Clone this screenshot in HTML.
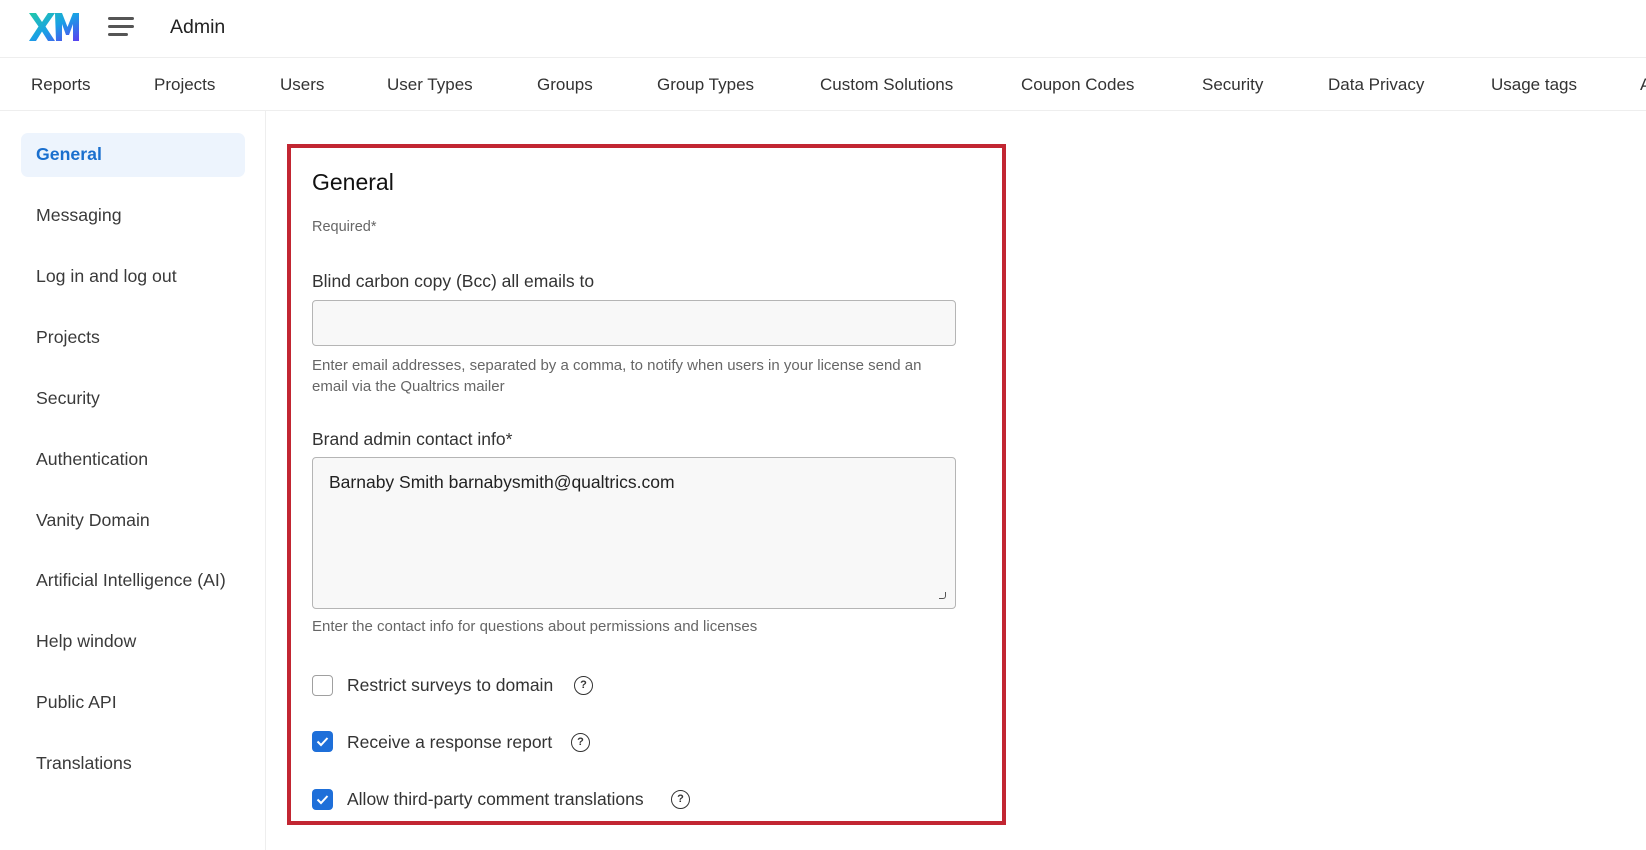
<!DOCTYPE html>
<html><head><meta charset="utf-8"><style>
*{box-sizing:border-box;margin:0;padding:0}
body{width:1646px;height:850px;overflow:hidden;background:#fff;font-family:"Liberation Sans",sans-serif;color:#333;position:relative}
.a{position:absolute;white-space:nowrap}
.nav{font-size:17px;color:#333;top:75px}
.side{font-size:17.7px;color:#3a3a3a;left:36px}
.cb{position:absolute;left:312px;width:21px;height:21px;border-radius:4px}
.cb.on{background:#1e6fd9}
.cb.off{border:1.5px solid #a0a0a0;background:#fff}
.lbl{font-size:17.5px;color:#333;left:347px}
.q{position:absolute;width:19px;height:19px;border:1.5px solid #333;border-radius:50%;font-size:11px;text-align:center;line-height:16px;font-weight:bold;color:#333}
.help{font-size:15px;color:#666}
</style></head><body>
<svg class="a" style="left:29px;top:13px" width="50" height="28" viewBox="0 0 50 28">
<defs><linearGradient id="g" x1="0" y1="0" x2="1" y2="1"><stop offset="0" stop-color="#21c9a8"/><stop offset=".5" stop-color="#1aa0e6"/><stop offset="1" stop-color="#5b3ef0"/></linearGradient></defs>
<path fill="url(#g)" d="M0 0h7l6 9 6-9h7l-9.5 13.5L26 28h-7l-6-9.5L7 28H0l9.5-14.5z M26 0h7l5.5 14L44 0h6v28h-6V11l-4 11h-3l-4-11v17h-6z"/></svg>
<div class="a" style="left:108px;top:17px;width:26px;height:3px;background:#555;border-radius:2px"></div>
<div class="a" style="left:108px;top:25px;width:26px;height:3px;background:#555;border-radius:2px"></div>
<div class="a" style="left:108px;top:33px;width:20px;height:3px;background:#555;border-radius:2px"></div>
<div class="a" style="left:170px;top:16px;font-size:19.5px;color:#222">Admin</div>
<div class="a" style="left:0;top:57px;width:1646px;height:1px;background:#eee"></div>
<div class="a nav" style="left:31px">Reports</div>
<div class="a nav" style="left:154px">Projects</div>
<div class="a nav" style="left:280px">Users</div>
<div class="a nav" style="left:387px">User Types</div>
<div class="a nav" style="left:537px">Groups</div>
<div class="a nav" style="left:657px">Group Types</div>
<div class="a nav" style="left:820px">Custom Solutions</div>
<div class="a nav" style="left:1021px">Coupon Codes</div>
<div class="a nav" style="left:1202px">Security</div>
<div class="a nav" style="left:1328px">Data Privacy</div>
<div class="a nav" style="left:1491px">Usage tags</div>
<div class="a nav" style="left:1640px">A</div>
<div class="a" style="left:0;top:110px;width:1646px;height:1px;background:#eee"></div>
<div class="a" style="left:265px;top:111px;width:1px;height:739px;background:#eee"></div>
<div class="a" style="left:21px;top:133px;width:224px;height:44px;background:#edf4fd;border-radius:7px"></div>
<div class="a side" style="top:144px;color:#1a6fce;font-weight:bold">General</div>
<div class="a side" style="top:205px">Messaging</div>
<div class="a side" style="top:266px">Log in and log out</div>
<div class="a side" style="top:327px">Projects</div>
<div class="a side" style="top:388px">Security</div>
<div class="a side" style="top:449px">Authentication</div>
<div class="a side" style="top:510px">Vanity Domain</div>
<div class="a side" style="top:570px">Artificial Intelligence (AI)</div>
<div class="a side" style="top:631px">Help window</div>
<div class="a side" style="top:692px">Public API</div>
<div class="a side" style="top:753px">Translations</div>
<div class="a" style="left:287px;top:144px;width:719px;height:681px;border:4px solid #c22632"></div>
<div class="a" style="left:312px;top:169px;font-size:23px;color:#111">General</div>
<div class="a" style="left:312px;top:219px;font-size:14.5px;color:#666">Required*</div>
<div class="a" style="left:312px;top:271px;font-size:17.5px;color:#333">Blind carbon copy (Bcc) all emails to</div>
<div class="a" style="left:312px;top:300px;width:644px;height:46px;border:1px solid #b5b5b5;border-radius:4px;background:#f8f8f8"></div>
<div class="a help" style="left:312px;top:355px;line-height:21px">Enter email addresses, separated by a comma, to notify when users in your license send an<br>email via the Qualtrics mailer</div>
<div class="a" style="left:312px;top:429px;font-size:17.5px;color:#333">Brand admin contact info*</div>
<div class="a" style="left:312px;top:457px;width:644px;height:152px;border:1px solid #b5b5b5;border-radius:4px;background:#f8f8f8"></div>
<div class="a" style="left:329px;top:472px;font-size:17.5px;color:#222">Barnaby Smith barnabysmith@qualtrics.com</div>
<div class="a" style="left:939px;top:592px;width:7px;height:7px;border-right:1.5px solid #555;border-bottom:1.5px solid #555;border-bottom-right-radius:3px"></div>
<div class="a help" style="left:312px;top:618px">Enter the contact info for questions about permissions and licenses</div>
<div class="cb off" style="top:675px"></div>
<div class="a lbl" style="top:675px">Restrict surveys to domain</div>
<div class="q" style="left:574px;top:676px">?</div>
<div class="cb on" style="top:731px"><svg width="21" height="21"><path d="M5.5 10.5l3.5 3.5 6.5-7" stroke="#fff" stroke-width="2" fill="none"/></svg></div>
<div class="a lbl" style="top:732px">Receive a response report</div>
<div class="q" style="left:571px;top:733px">?</div>
<div class="cb on" style="top:789px"><svg width="21" height="21"><path d="M5.5 10.5l3.5 3.5 6.5-7" stroke="#fff" stroke-width="2" fill="none"/></svg></div>
<div class="a lbl" style="top:789px">Allow third-party comment translations</div>
<div class="q" style="left:671px;top:790px">?</div>
</body></html>
